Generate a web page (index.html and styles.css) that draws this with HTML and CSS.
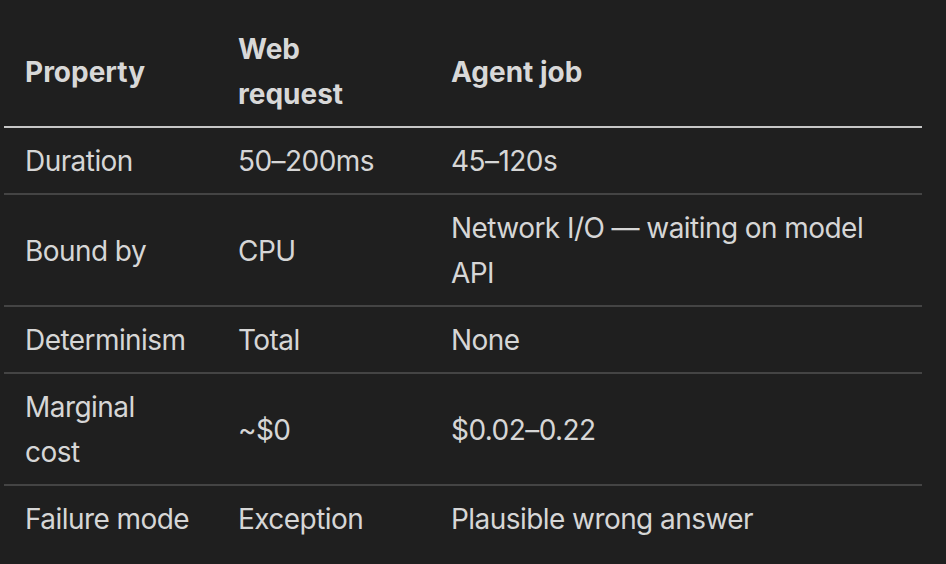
FILE: index.html
```html
<!DOCTYPE html>
<html lang="en">
<head>
    <meta charset="UTF-8">
    <meta name="viewport" content="width=device-width, initial-scale=1.0">
    <title>Web request vs Agent job</title>
    <link rel="stylesheet" href="styles.css">
</head>
<body>
    <div class="content">
        <table class="compare-table">
            <colgroup>
                <col class="col-property">
                <col class="col-web">
                <col class="col-agent">
            </colgroup>
            <thead>
                <tr>
                    <th>Property</th>
                    <th>Web request</th>
                    <th>Agent job</th>
                </tr>
            </thead>
            <tbody>
                <tr>
                    <td>Duration</td>
                    <td>50–200ms</td>
                    <td>45–120s</td>
                </tr>
                <tr>
                    <td>Bound by</td>
                    <td>CPU</td>
                    <td>Network I/O — waiting on model API</td>
                </tr>
                <tr>
                    <td>Determinism</td>
                    <td>Total</td>
                    <td>None</td>
                </tr>
                <tr>
                    <td>Marginal cost</td>
                    <td>~$0</td>
                    <td>$0.02–0.22</td>
                </tr>
                <tr>
                    <td>Failure mode</td>
                    <td>Exception</td>
                    <td>Plausible wrong answer</td>
                </tr>
            </tbody>
        </table>
    </div>
</body>
</html>
```

FILE: styles.css
```css
* {
    margin: 0;
    padding: 0;
    box-sizing: border-box;
}

body {
    font-family: Inter, 'Noto Sans', 'Liberation Sans', sans-serif;
    background-color: #1f1f1f;
    color: #d6d6d6;
    font-size: 28px;
    line-height: 45px;
}

.content {
    padding: 16px 24px 0 4px;
}

.compare-table {
    width: 918px;
    border-collapse: collapse;
    table-layout: fixed;
}

.col-property,
.col-web {
    width: 213px;
}

.compare-table th,
.compare-table td {
    padding: 11px 21px 9px;
    text-align: left;
    vertical-align: middle;
}

.compare-table th {
    font-weight: 700;
    color: #d8d8d8;
    border-bottom: 2px solid #c6c6c6;
}

.compare-table td {
    font-weight: 400;
    letter-spacing: -0.02em;
    border-bottom: 2px solid #444444;
}

.compare-table tbody tr:last-child td {
    border-bottom: none;
}
```
